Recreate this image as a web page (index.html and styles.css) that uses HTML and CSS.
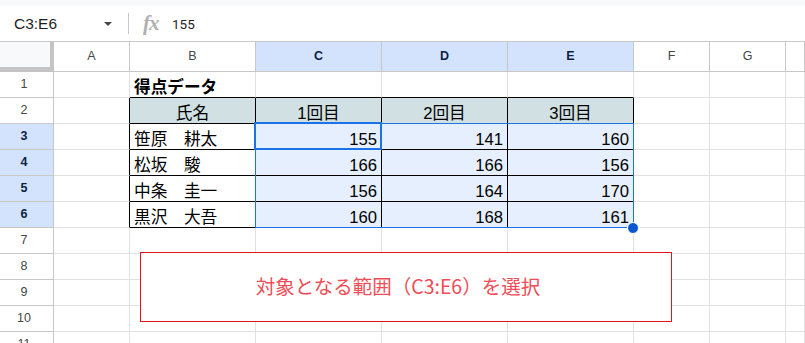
FILE: index.html
```html
<!DOCTYPE html>
<html lang="ja">
<head>
<meta charset="utf-8">
<title>Sheet</title>
<link rel="stylesheet" href="styles.css">
</head>
<body>
<div class="top"></div>
<div class="fbar">
  <div class="namebox"><span class="ref">C3:E6</span><span class="caret"></span></div>
  <div class="sep"></div>
  <span class="fx">fx</span>
  <span class="fval">155</span>
</div>
<div class="sheet">
  <div class="grid">
    <div class="c corner"></div>
    <div class="c hc">A</div>
    <div class="c hc">B</div>
    <div class="c hc hsel">C</div>
    <div class="c hc hsel">D</div>
    <div class="c hc hsel">E</div>
    <div class="c hc">F</div>
    <div class="c hc">G</div>
    <div class="c hc"></div>

    <div class="c hr">1</div>
    <div class="c"></div>
    <div class="c txt bold bb">得点データ</div>
    <div class="c bb"></div>
    <div class="c bb"></div>
    <div class="c bb"></div>
    <div class="c"></div>
    <div class="c"></div>
    <div class="c"></div>

    <div class="c hr">2</div>
    <div class="c brk"></div>
    <div class="c th blk">氏名</div>
    <div class="c th blk">1回目</div>
    <div class="c th blk">2回目</div>
    <div class="c th blk">3回目</div>
    <div class="c"></div>
    <div class="c"></div>
    <div class="c"></div>

    <div class="c hr hsel">3</div>
    <div class="c brk"></div>
    <div class="c txt blk">笹原　耕太</div>
    <div class="c num blk sel">155</div>
    <div class="c num blk sel">141</div>
    <div class="c num blk sel">160</div>
    <div class="c"></div>
    <div class="c"></div>
    <div class="c"></div>

    <div class="c hr hsel">4</div>
    <div class="c brk"></div>
    <div class="c txt blk">松坂　駿</div>
    <div class="c num blk sel">166</div>
    <div class="c num blk sel">166</div>
    <div class="c num blk sel">156</div>
    <div class="c"></div>
    <div class="c"></div>
    <div class="c"></div>

    <div class="c hr hsel">5</div>
    <div class="c brk"></div>
    <div class="c txt blk">中条　圭一</div>
    <div class="c num blk sel">156</div>
    <div class="c num blk sel">164</div>
    <div class="c num blk sel">170</div>
    <div class="c"></div>
    <div class="c"></div>
    <div class="c"></div>

    <div class="c hr hsel">6</div>
    <div class="c brk"></div>
    <div class="c txt blk">黒沢　大吾</div>
    <div class="c num blk sel">160</div>
    <div class="c num blk sel">168</div>
    <div class="c num blk sel">161</div>
    <div class="c"></div>
    <div class="c"></div>
    <div class="c"></div>

    <div class="c hr">7</div>
    <div class="c"></div><div class="c"></div><div class="c"></div><div class="c"></div><div class="c"></div><div class="c"></div><div class="c"></div><div class="c"></div>

    <div class="c hr">8</div>
    <div class="c"></div><div class="c"></div><div class="c"></div><div class="c"></div><div class="c"></div><div class="c"></div><div class="c"></div><div class="c"></div>

    <div class="c hr">9</div>
    <div class="c"></div><div class="c"></div><div class="c"></div><div class="c"></div><div class="c"></div><div class="c"></div><div class="c"></div><div class="c"></div>

    <div class="c hr">10</div>
    <div class="c"></div><div class="c"></div><div class="c"></div><div class="c"></div><div class="c"></div><div class="c"></div><div class="c"></div><div class="c"></div>

    <div class="c hr">11</div>
    <div class="c"></div><div class="c"></div><div class="c"></div><div class="c"></div><div class="c"></div><div class="c"></div><div class="c"></div><div class="c"></div>
  </div>
  <div class="range"></div>
  <div class="active"></div>
  <div class="handle"></div>
  <div class="note">対象となる範囲（C3:E6）を選択</div>
</div>
</body>
</html>
```
FILE: styles.css
```css
html, body {
  margin: 0;
  padding: 0;
  background: #fff;
  overflow: hidden;
}
body {
  font-family: "Liberation Sans", "Noto Sans CJK JP", sans-serif;
  color: #000;
  width: 805px;
  height: 343px;
}
.top {
  height: 6px;
  background: #f8f9fa;
}
.fbar {
  height: 35px;
  border-bottom: 1px solid #c7c7c7;
  display: flex;
  align-items: center;
  background: #fff;
}
.namebox {
  width: 120px;
  box-sizing: border-box;
  padding: 0 8px 0 14px;
  display: flex;
  align-items: center;
  justify-content: space-between;
}
.ref {
  font-family: "Liberation Sans", sans-serif;
  font-size: 15.5px;
  color: #1f1f1f;
}
.caret {
  width: 0;
  height: 0;
  border-left: 4px solid transparent;
  border-right: 4px solid transparent;
  border-top: 4px solid #444746;
}
.sep {
  margin-left: 8px;
  width: 1px;
  height: 21px;
  background: #c7c7c7;
}
.fx {
  margin-left: 14px;
  width: 18px;
  display: inline-block;
  font-family: "Liberation Serif", serif;
  font-style: italic;
  font-weight: bold;
  font-size: 21px;
  color: #b0b0b0;
  letter-spacing: -1px;
  line-height: 1;
}
.fval {
  margin-left: 11px;
  font-family: Roboto, "Liberation Sans", sans-serif;
  font-size: 13.5px;
  color: #1f1f1f;
}
.sheet {
  position: relative;
}
.grid {
  display: grid;
  grid-template-columns: 54px 76px 126px 126px 126px 126px 76px 76px 1fr;
  grid-template-rows: 30px;
  grid-auto-rows: 26px;
}
.c {
  box-sizing: border-box;
  border-right: 1px solid #e1e1e1;
  border-bottom: 1px solid #e1e1e1;
  font-size: 16.67px;
  line-height: 19px;
  display: flex;
  align-items: flex-end;
  white-space: nowrap;
  overflow: visible;
}
.corner {
  background: #f8f9fa;
  border-right: 4px solid #c4c4c4;
  border-bottom: 5px solid #c4c4c4;
}
.hc {
  border-right-color: #c7c7c7;
  border-bottom-color: #c7c7c7;
  font-size: 12.5px;
  color: #444746;
  align-items: center;
  justify-content: center;
  line-height: 1;
}
.hr {
  border-right-color: #c7c7c7;
  border-bottom-color: #c7c7c7;
  font-size: 12.5px;
  color: #444746;
  align-items: center;
  justify-content: center;
  padding-right: 5px;
  line-height: 1;
}
.hsel {
  background: #d3e3fd;
  color: #0b1f44;
  font-weight: bold;
}
.txt {
  padding-left: 4px;
}
.num {
  justify-content: flex-end;
  padding-right: 4px;
}
.bold {
  font-weight: bold;
}
.bb {
  border-bottom-color: #000;
}
.brk {
  border-right-color: #000;
}
.blk {
  border-right-color: #000;
  border-bottom-color: #000;
}
.th {
  background: #d0e0e3;
  justify-content: center;
}
.sel {
  background: #e6effd;
}
.range {
  position: absolute;
  left: 255px;
  top: 81px;
  width: 379px;
  height: 105px;
  box-sizing: border-box;
  border: 1px solid #1a73e8;
}
.active {
  position: absolute;
  left: 254px;
  top: 80px;
  width: 128px;
  height: 28px;
  box-sizing: border-box;
  border: 2px solid #1a73e8;
}
.handle {
  position: absolute;
  left: 627px;
  top: 180px;
  width: 12px;
  height: 12px;
  box-sizing: border-box;
  border-radius: 50%;
  background: #0b57d0;
  border: 1px solid #fff;
}
.note {
  position: absolute;
  left: 140px;
  top: 210px;
  width: 532px;
  height: 70px;
  box-sizing: border-box;
  border: 1px solid #e3141f;
  background: #fff;
  display: flex;
  align-items: center;
  justify-content: center;
  padding: 0 16px 4px 0;
  font-family: "Noto Sans CJK JP", sans-serif;
  font-size: 19.5px;
  color: #ef4c57;
}
```
